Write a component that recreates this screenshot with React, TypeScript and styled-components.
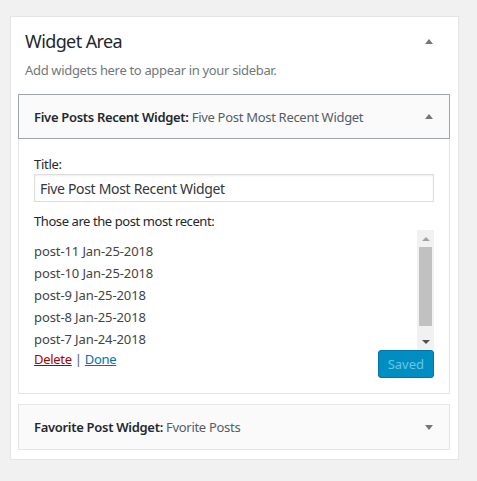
import React from "react";
import styled, { createGlobalStyle } from "styled-components";

const Global = createGlobalStyle`
  html, body { margin: 0; padding: 0; background: #f1f1f1; }
  body { font-family: "Noto Sans", "Open Sans", sans-serif; color: #444; font-size: 13px; letter-spacing: -0.3px; }
  * { box-sizing: border-box; }
`;

const Card = styled.div`
  margin: 16px 0 0 10px;
  width: 449px;
  background: #fff;
  border: 1px solid #e5e5e5;
  box-shadow: 0 1px 1px rgba(0, 0, 0, 0.04);
`;

const SidebarName = styled.div`
  display: flex;
  align-items: center;
  justify-content: space-between;
  padding: 10px 0 0 14px;
`;

const Heading = styled.h2`
  margin: 0;
  font-size: 18px;
  line-height: 28px;
  font-weight: 400;
  letter-spacing: -0.6px;
  color: #23282d;
`;

const Description = styled.p`
  margin: 5px 0 0;
  padding: 0 14px;
  font-size: 13px;
  line-height: 20px;
  letter-spacing: -0.33px;
  color: #72777c;
`;

const Holder = styled.div`
  padding: 14px 8px 9px 7px;
  display: flex;
  flex-direction: column;
  gap: 10px;
`;

const Widget = styled.div`
  width: 432px;
`;

const WidgetTop = styled.div<{ $open?: boolean }>`
  display: flex;
  align-items: center;
  justify-content: space-between;
  height: ${(p) => (p.$open ? 45 : 46)}px;
  padding: 0 0 0 15px;
  background: #fafafa;
  border: 1px solid ${(p) => (p.$open ? "#a0a5aa" : "#e5e5e5")};
`;

const WidgetTitle = styled.div`
  font-size: 13px;
  line-height: 18px;
  color: #555d66;
  white-space: nowrap;
  strong {
    font-weight: 600;
    color: #23282d;
  }
`;

const Toggle = styled.span<{ $down?: boolean; $right: number }>`
  display: block;
  width: 0;
  height: 0;
  margin-right: ${(p) => p.$right}px;
  border-left: 4px solid transparent;
  border-right: 4px solid transparent;
  ${(p) =>
    p.$down
      ? "border-top: 5px solid #72777c;"
      : "border-bottom: 5px solid #72777c;"}
`;

const WidgetBody = styled.div`
  padding: 15px 15px 15px;
  border: 1px solid #e5e5e5;
  border-top: none;
  display: flex;
  flex-direction: column;
`;

const Label = styled.label`
  display: block;
  font-size: 13px;
  line-height: 20px;
  color: #23282d;
`;

const TextInput = styled.input`
  display: block;
  width: 400px;
  height: 28px;
  margin: 0;
  padding: 3px 5px;
  font-family: inherit;
  font-size: 14px;
  letter-spacing: -0.32px;
  color: #32373c;
  border: 1px solid #ddd;
  box-shadow: inset 0 1px 2px rgba(0, 0, 0, 0.07);
  outline: none;
`;

const Intro = styled.p`
  margin: 10px 0 0;
  font-size: 13px;
  line-height: 18px;
  letter-spacing: -0.42px;
  color: #23282d;
`;

const ListRow = styled.div`
  display: flex;
  height: 120px;
`;

const PostList = styled.ul`
  flex: 1;
  margin: 0;
  padding: 10px 0 0;
  list-style: none;
  overflow: hidden;
`;

const PostItem = styled.li`
  font-size: 13px;
  line-height: 22px;
  letter-spacing: -0.1px;
  color: #444;
`;

const ScrollBar = styled.div`
  width: 17px;
  display: flex;
  flex-direction: column;
  background: #f1f1f1;
`;

const ScrollButton = styled.div<{ $down?: boolean }>`
  height: 17px;
  display: flex;
  align-items: center;
  justify-content: center;
  &::after {
    content: "";
    width: 0;
    height: 0;
    border-left: 4px solid transparent;
    border-right: 4px solid transparent;
    ${(p) =>
      p.$down
        ? "border-top: 4px solid #505050;"
        : "border-bottom: 4px solid #a3a3a3;"}
  }
`;

const ScrollTrack = styled.div`
  flex: 1;
  padding: 0 2px;
`;

const Thumb = styled.div`
  height: 79px;
  background: #c1c1c1;
`;

const Actions = styled.div`
  display: flex;
  justify-content: space-between;
  align-items: flex-start;
`;

const LinkLine = styled.div`
  font-size: 13px;
  line-height: 18px;
  color: #555d66;
`;

const ActionLink = styled.a<{ $danger?: boolean }>`
  color: ${(p) => (p.$danger ? "#a00" : "#0073aa")};
  text-decoration: underline;
  cursor: pointer;
`;

const SaveButton = styled.button`
  height: 28px;
  padding: 0 9px;
  font-family: inherit;
  font-size: 13px;
  line-height: 26px;
  color: #66c6e4;
  background: #008ec2;
  border: 1px solid #0073aa;
  border-radius: 3px;
`;

const posts = [
  "post-11 Jan-25-2018",
  "post-10 Jan-25-2018",
  "post-9 Jan-25-2018",
  "post-8 Jan-25-2018",
  "post-7 Jan-24-2018",
];

export default function App() {
  return (
    <>
      <Global />
      <Card>
        <SidebarName>
          <Heading>Widget Area</Heading>
          <Toggle $right={25} />
        </SidebarName>
        <Description>Add widgets here to appear in your sidebar.</Description>
        <Holder>
          <Widget>
            <WidgetTop $open>
              <WidgetTitle>
                <strong>Five Posts Recent Widget:</strong> Five Post Most Recent Widget
              </WidgetTitle>
              <Toggle $right={16} />
            </WidgetTop>
            <WidgetBody>
              <Label>Title:</Label>
              <TextInput defaultValue="Five Post Most Recent Widget" />
              <Intro>Those are the post most recent:</Intro>
              <ListRow>
                <PostList>
                  {posts.map((p) => (
                    <PostItem key={p}>{p}</PostItem>
                  ))}
                </PostList>
                <ScrollBar>
                  <ScrollButton />
                  <ScrollTrack>
                    <Thumb />
                  </ScrollTrack>
                  <ScrollButton $down />
                </ScrollBar>
              </ListRow>
              <Actions>
                <LinkLine>
                  <ActionLink $danger>Delete</ActionLink> | <ActionLink>Done</ActionLink>
                </LinkLine>
                <SaveButton disabled>Saved</SaveButton>
              </Actions>
            </WidgetBody>
          </Widget>
          <Widget>
            <WidgetTop>
              <WidgetTitle>
                <strong>Favorite Post Widget:</strong> Fvorite Posts
              </WidgetTitle>
              <Toggle $down $right={16} />
            </WidgetTop>
          </Widget>
        </Holder>
      </Card>
    </>
  );
}
